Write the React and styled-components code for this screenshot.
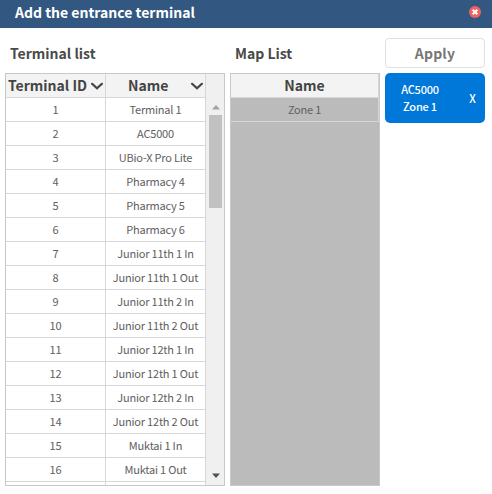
import React from 'react';
import styled, { createGlobalStyle } from 'styled-components';

const GlobalStyle = createGlobalStyle`
  * { box-sizing: border-box; }
  body {
    margin: 0;
    background: #fff;
    color: #4a4a4a;
    font-family: "Noto Sans CJK KR", "Noto Sans", sans-serif;
  }
`;

const Dialog = styled.div`
  width: 492px;
  height: 494px;
  overflow: hidden;
  background: #fff;
`;

const TitleBar = styled.header`
  display: flex;
  align-items: center;
  justify-content: space-between;
  height: 28px;
  padding: 0 11px 4px 15px;
  background: #325882;
`;

const Title = styled.h1`
  margin: 0;
  color: #fff;
  font-size: 14px;
  line-height: 24px;
  font-weight: 700;
  white-space: nowrap;
`;

const CloseButton = styled.button`
  display: flex;
  width: 12px;
  height: 12px;
  padding: 0;
  border: 0;
  background: none;
`;

const Content = styled.main`
  display: grid;
  grid-template-columns: 220px 150px 100px;
  column-gap: 5px;
  padding: 10px 0 0 5px;
`;

const Column = styled.section`
  display: flex;
  flex-direction: column;
`;

const Heading = styled.h2`
  height: 35px;
  margin: 0;
  padding: 0 0 5px 5px;
  font-size: 14px;
  line-height: 30px;
  font-weight: 700;
  white-space: nowrap;
`;

const Frame = styled.div`
  display: flex;
  height: 413px;
  border: 1px solid #c8c8c8;
  background: ${(p) => (p.$filled ? '#bbb' : '#fff')};
  overflow: hidden;
`;

const Table = styled.div`
  flex: 1;
`;

const Row = styled.div`
  display: grid;
  grid-template-columns: ${(p) => p.$columns};
  height: 24px;
`;

const Cell = styled.div`
  border-right: 1px solid #d7d7d7;
  border-bottom: 1px solid #d7d7d7;
  color: #606060;
  font-size: 11px;
  line-height: 23px;
  letter-spacing: -0.2px;
  text-align: center;
  white-space: nowrap;
`;

const HeadCell = styled.div`
  display: flex;
  align-items: center;
  justify-content: ${(p) => (p.$center ? 'center' : 'space-between')};
  padding: ${(p) => p.$pad || '0'};
  border-right: 1px solid #d7d7d7;
  border-bottom: 1px solid #d7d7d7;
  background: #f3f3f3;
  color: #444;
  font-size: 14px;
  line-height: 23px;
  font-weight: 700;
  white-space: nowrap;
`;

const Scrollbar = styled.div`
  display: flex;
  flex-direction: column;
  align-items: center;
  width: 18px;
  padding: 31px 0 7px 1px;
  background: #f0f0f0;
`;

const Thumb = styled.div`
  width: 13px;
  height: 93px;
  margin: 5px 0 auto;
  background: #c1c1c1;
`;

const ApplyButton = styled.button`
  height: 30px;
  margin-bottom: 5px;
  padding: 0;
  border: 1px solid #e0e0e0;
  border-radius: 4px;
  background: #fff;
  color: #777;
  font: 700 14px/28px "Noto Sans CJK KR", "Noto Sans", sans-serif;
  letter-spacing: 0.2px;
`;

const Selection = styled.div`
  display: flex;
  align-items: center;
  height: 50px;
  border-radius: 5px;
  background: #0078d9;
  color: #fff;
`;

const SelectionText = styled.div`
  width: 70px;
  font-size: 11px;
  font-weight: 500;
  line-height: 17px;
  letter-spacing: -0.2px;
  text-align: center;
`;

const RemoveButton = styled.button`
  flex: 1;
  padding: 0 0 0 5px;
  border: 0;
  background: none;
  color: #fff;
  font: 500 11px/17px "Noto Sans CJK KR", "Noto Sans", sans-serif;
`;

const Chevron = () => (
  <svg width="12" height="8" viewBox="0 0 12 8" fill="none">
    <path d="M1.1 1.8 6 6.2 10.9 1.8" stroke="#444" strokeWidth="2.2" strokeLinecap="round" />
  </svg>
);

const ScrollArrow = ({ down }) => (
  <svg width="8" height="5" viewBox="0 0 8 5">
    {down ? <path d="M0 0.5h8L4 5z" fill="#505050" /> : <path d="M0 4.5h8L4 0z" fill="#a3a3a3" />}
  </svg>
);

const terminals = [
  'Terminal 1',
  'AC5000',
  'UBio-X Pro Lite',
  'Pharmacy 4',
  'Pharmacy 5',
  'Pharmacy 6',
  'Junior 11th 1 In',
  'Junior 11th 1 Out',
  'Junior 11th 2 In',
  'Junior 11th 2 Out',
  'Junior 12th 1 In',
  'Junior 12th 1 Out',
  'Junior 12th 2 In',
  'Junior 12th 2 Out',
  'Muktai 1 In',
  'Muktai 1 Out',
];

export default function App() {
  return (
    <Dialog>
      <GlobalStyle />
      <TitleBar>
        <Title>Add the entrance terminal</Title>
        <CloseButton aria-label="Close">
          <svg width="12" height="12" viewBox="0 0 12 12">
            <circle cx="6" cy="6" r="6" fill="#ee6361" />
            <path d="M3.7 3.7l4.6 4.6M8.3 3.7L3.7 8.3" stroke="#fff" strokeWidth="2" />
          </svg>
        </CloseButton>
      </TitleBar>
      <Content>
        <Column>
          <Heading>Terminal list</Heading>
          <Frame>
            <Table>
              <Row $columns="100px 100px">
                <HeadCell $pad="0 2px 0 2px">Terminal ID<Chevron /></HeadCell>
                <HeadCell $pad="0 2px 0 22px">Name<Chevron /></HeadCell>
              </Row>
              {terminals.map((name, i) => (
                <Row key={name} $columns="100px 100px">
                  <Cell>{i + 1}</Cell>
                  <Cell>{name}</Cell>
                </Row>
              ))}
              <Row $columns="100px 100px">
                <Cell />
                <Cell />
              </Row>
            </Table>
            <Scrollbar>
              <ScrollArrow />
              <Thumb />
              <ScrollArrow down />
            </Scrollbar>
          </Frame>
        </Column>
        <Column>
          <Heading>Map List</Heading>
          <Frame $filled>
            <Table>
              <Row $columns="1fr">
                <HeadCell $center>Name</HeadCell>
              </Row>
              <Row $columns="1fr">
                <Cell>Zone 1</Cell>
              </Row>
            </Table>
          </Frame>
        </Column>
        <Column>
          <ApplyButton>Apply</ApplyButton>
          <Selection>
            <SelectionText>
              AC5000
              <br />
              Zone 1
            </SelectionText>
            <RemoveButton>X</RemoveButton>
          </Selection>
        </Column>
      </Content>
    </Dialog>
  );
}
